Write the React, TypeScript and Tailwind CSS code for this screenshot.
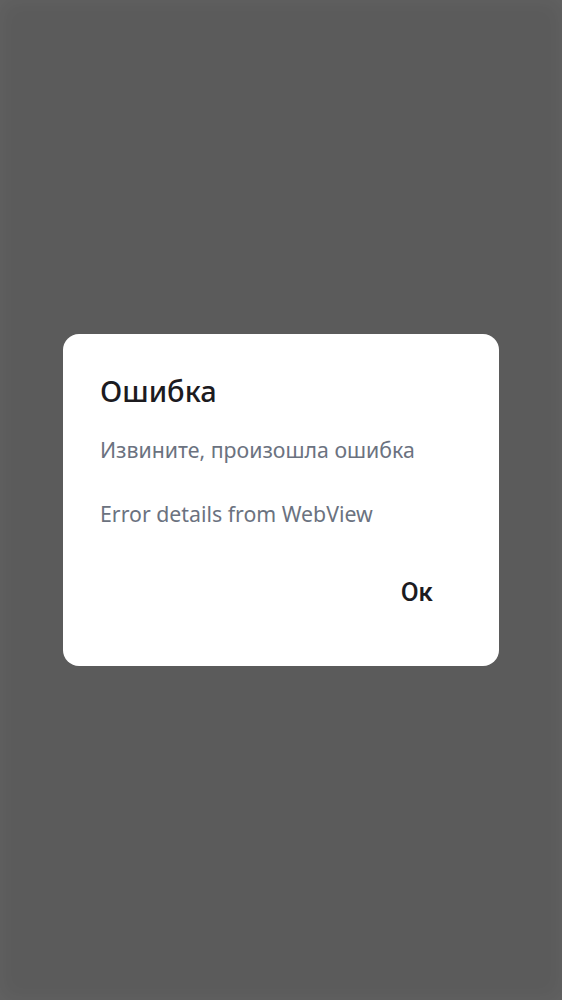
export default function App() {
  return (
    <div className="min-h-screen w-full bg-[#5b5b5b] shadow-[inset_0_0_22px_rgba(255,255,255,0.05)] flex items-center justify-center">
      <div className="w-[436px] bg-white rounded-2xl pl-[37px] pr-[54px] pt-[39px] pb-[50px] flex flex-col font-['Noto_Sans',sans-serif]">
        <h2 className="text-[29px] leading-[36px] font-medium text-[#1c1b1f]">Ошибка</h2>
        <p className="mt-[27px] text-[21.3px] leading-[28px] text-[#6b7280]">Извините, произошла ошибка</p>
        <p className="mt-[36px] text-[21.3px] leading-[28px] text-[#6b7280]">Error details from WebView</p>
        <div className="mt-[40px] flex justify-end">
          <button className="px-3 py-2 text-[26px] leading-[32px] font-medium text-[#1c1b1f] font-['Roboto',sans-serif]">
            Ок
          </button>
        </div>
      </div>
    </div>
  )
}
